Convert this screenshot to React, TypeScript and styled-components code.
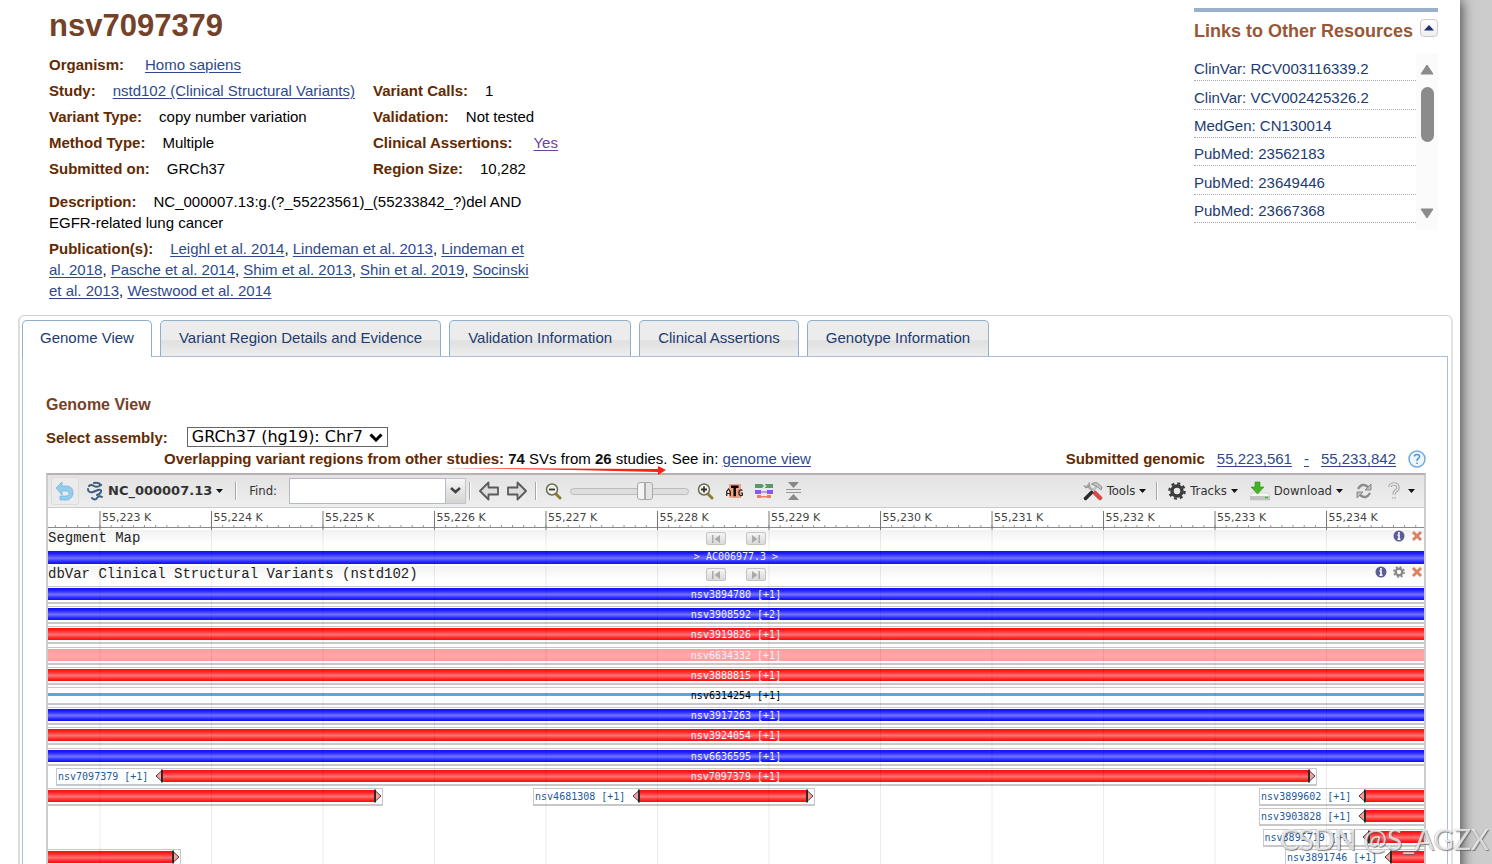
import React from "react";
import styled, { createGlobalStyle, css } from "styled-components";

const GlobalStyle = createGlobalStyle`
  * { box-sizing: border-box; }
  body { margin: 0; background: #ccc; color: #000; font: 15px/21px Arial, "Liberation Sans", sans-serif; }
  button, input, select { font: inherit; color: inherit; margin: 0; padding: 0; }
  ul, h1, h2, dl, dd, p { margin: 0; padding: 0; }
`;

const brown = "#642a02";
const linkBlue = "#2f4a8b";

/* ---------- page ---------- */
const Page = styled.div`
  height: 100vh;
  overflow: hidden;
  padding-right: 32px;
`;
const Sheet = styled.main`
  position: relative;
  min-height: 100vh;
  background: #fff;
  box-shadow: 2px 0 12px rgba(0, 0, 0, 0.65);
  padding: 8px 7px 0 18px;
`;
const Header = styled.header`
  display: flex;
  justify-content: space-between;
  padding: 0 15px 14px 31px;
`;
const Info = styled.section`
  width: 488px;
`;
const Title = styled.h1`
  font-size: 31px;
  line-height: 36px;
  color: #744228;
  margin-bottom: 10px;
`;
const Facts = styled.dl`
  display: grid;
  grid-template-columns: 324px 1fr;
  row-gap: 5px;
  margin-bottom: 12px;
`;
const Fact = styled.div<{ $wide?: boolean }>`
  white-space: nowrap;
  ${(p) => p.$wide && css`grid-column: 1 / -1;`}
`;
const Term = styled.dt`
  display: inline;
  font-weight: bold;
  color: ${brown};
  margin-right: 17px;
`;
const Value = styled.dd<{ $indent?: boolean }>`
  display: inline;
  padding-left: ${(p) => (p.$indent ? 4 : 0)}px;
`;
const Paragraph = styled.div`
  margin-bottom: 5px;
`;
const Link = styled.a<{ $visited?: boolean }>`
  color: ${(p) => (p.$visited ? "#6b3fa0" : linkBlue)};
  text-decoration: underline;
  text-underline-offset: 2px;
`;

/* ---------- resources ---------- */
const Aside = styled.aside`
  width: 244px;
  border-top: 4px solid #9aafca;
`;
const AsideHead = styled.div`
  display: flex;
  justify-content: space-between;
  padding-top: 7px;
  margin-bottom: 10px;
`;
const AsideTitle = styled.h2`
  font-size: 18px;
  line-height: 24px;
  color: #985735;
  white-space: nowrap;
`;
const Collapse = styled.button`
  width: 18px;
  height: 18px;
  display: grid;
  place-items: center;
  border: 1px solid #ccc;
  border-radius: 4px;
  background: linear-gradient(#fff, #eee);
`;
const ScrollArea = styled.div`
  display: flex;
  height: 177px;
`;
const Resources = styled.ul`
  flex: 1;
  height: 170px;
  display: grid;
  grid-template-rows: repeat(6, 1fr);
  list-style: none;
`;
const Resource = styled.li`
  display: flex;
  align-items: flex-end;
  line-height: 22px;
  border-bottom: 1px dotted #aaa;
  a { color: #1c3b70; text-decoration: none; }
`;
const ScrollTrack = styled.div`
  width: 22px;
  display: flex;
  flex-direction: column;
  align-items: center;
  padding: 11px 0;
  background: #fbfbfb;
`;
const Thumb = styled.div`
  width: 13px;
  height: 55px;
  margin: 12px 0 auto;
  border-radius: 7px;
  background: #8b8b8b;
`;

/* ---------- tabs ---------- */
const Tabs = styled.section`
  border: 2px solid #ddd;
  border-color: #d0d0d0 #e2e2e2 #d0d0d0 #ddd;
  border-width: 1px 2px;
  border-radius: 6px;
  padding: 4px 3px 4px 2px;
`;
const TabList = styled.div`
  display: flex;
  gap: 8px;
`;
const Tab = styled.button<{ $active?: boolean }>`
  height: 36px;
  padding: 0 18px 2px;
  white-space: nowrap;
  color: #1c3b70;
  border: 1px solid #8fb0cc;
  border-bottom: 0;
  border-radius: 5px 5px 0 0;
  background: linear-gradient(#ececec 55%, #e0e0e0 56%, #ededed);
  ${(p) =>
    p.$active &&
    css`
      position: relative;
      height: 37px;
      padding: 0 17px 3px;
      margin-bottom: -1px;
      background: #fff;
    `}
`;
const Panel = styled.div`
  border: 1px solid #a9bfd8;
  padding: 36px 21px 20px 23px;
`;
const PanelTitle = styled.h2`
  font-size: 16px;
  line-height: 24px;
  color: #744228;
  margin-bottom: 10px;
`;
const Assembly = styled.div`
  display: flex;
  align-items: center;
  gap: 19px;
  height: 20px;
  color: #000;
  label { font-weight: bold; color: ${brown}; }
`;
const SelectBox = styled.span`
  position: relative;
  display: inline-flex;
  svg { position: absolute; right: 5px; top: 6px; pointer-events: none; }
`;
const Select = styled.select`
  appearance: none;
  height: 20px;
  width: 201px;
  padding: 0 0 0 4px;
  border: 1px solid #666;
  border-radius: 0;
  background: #fff;
  color: #000;
  font: 16px/18px Verdana, "DejaVu Sans", sans-serif;
`;
const Summary = styled.div`
  display: flex;
  justify-content: space-between;
  align-items: center;
  padding: 1px 0 4px 118px;
  position: relative;
  b { color: #111; }
  strong { color: ${brown}; }
`;
const Submitted = styled.span`
  display: flex;
  align-items: center;
  gap: 12px;
`;
const RedArrow = styled.svg`
  position: absolute;
  left: 396px;
  top: 17px;
`;

/* ---------- viewer ---------- */
const Viewer = styled.div`
  border: 2px solid #cbcbcb;
  border-top-color: #b9b0b0;
`;
const Bar = styled.div`
  display: flex;
  justify-content: space-between;
  height: 33px;
  padding: 0 9px 0 3px;
  background: linear-gradient(#e3e3e3, #eee);
  border-bottom: 1px solid #ccc;
  color: #333;
  font: 13px/16px "DejaVu Sans Condensed", Tahoma, "DejaVu Sans", sans-serif;
`;
const Group = styled.div<{ $gap?: number }>`
  display: flex;
  align-items: center;
  gap: ${(p) => p.$gap ?? 12}px;
`;
const Tool = styled.button<{ $bold?: boolean; $boxed?: boolean; $gap?: number }>`
  display: flex;
  align-items: center;
  gap: ${(p) => p.$gap ?? 4}px;
  white-space: nowrap;
  border: 0;
  background: none;
  ${(p) => p.$bold && css`font: bold 13px/16px "DejaVu Sans", sans-serif;`}
  ${(p) => p.$boxed && css`border: 1px solid #dcdcdc; border-radius: 2px; padding: 3px; background: #ebebeb;`}
`;
const Separator = styled.span`
  width: 2px;
  height: 18px;
  background: linear-gradient(90deg, #aca899 50%, #fff 50%);
`;
const Finder = styled.span`
  display: flex;
  height: 26px;
`;
const FindInput = styled.input`
  width: 157px;
  border: 1px solid #b5b8c8;
  background: #fff;
`;
const Drop = styled.button`
  width: 20px;
  display: grid;
  place-items: start center;
  padding-top: 8px;
  border: 1px solid #c3c3cc;
  border-left: 0;
  background: linear-gradient(#f5f5f5, #d4d4d4);
`;
const Slider = styled.input`
  appearance: none;
  width: 119px;
  height: 18px;
  background: none;
  &::-webkit-slider-runnable-track {
    height: 7px;
    border: 1px solid #bbb;
    border-radius: 4px;
    background: #dedede;
  }
  &::-webkit-slider-thumb {
    appearance: none;
    width: 16px;
    height: 18px;
    margin-top: -7px;
    border: 1px solid #aaa;
    border-radius: 3px;
    background: linear-gradient(90deg, #f4f4f4 44%, #aaa 44% 56%, #e4e4e4 56%);
  }
`;
const View = styled.div`
  position: relative;
  overflow: hidden;
  background: #fff;
`;
const Ruler = styled.svg`
  display: block;
  width: 100%;
  height: 22px;
  text { font: 11px "DejaVu Sans", sans-serif; fill: #444; }
`;
const GridLines = styled.svg`
  position: absolute;
  inset: 22px 0 0 0;
  width: 100%;
  height: 100%;
  pointer-events: none;
`;
const TrackHead = styled.div`
  display: grid;
  grid-template-columns: 1fr auto 1fr;
  height: 20px;
  background: linear-gradient(#f2f2f2, #fff 70%);
  color: #222;
  font: 14px/16px "Liberation Mono", monospace;
  white-space: nowrap;
`;
const Steps = styled.span`
  display: flex;
  gap: 20px;
  padding-top: 2px;
`;
const Step = styled.button`
  width: 20px;
  height: 13px;
  display: grid;
  place-items: center;
  border: 1px solid #c4c4c4;
  border-radius: 2px;
  background: linear-gradient(#f4f4f4, #dadada);
`;
const HeadIcons = styled.span`
  display: flex;
  justify-content: flex-end;
  gap: 6px;
  padding-right: 1px;
  button { display: flex; border: 0; background: none; height: 12px; }
`;
const Lanes = styled.div`
  display: grid;
  grid-template-rows: repeat(14, 1fr);
  height: 283px;
`;
const Lane = styled.div`
  position: relative;
`;
const Feature = styled.div<{ $openLeft: boolean; $openRight: boolean }>`
  position: absolute;
  top: 0;
  display: flex;
  height: 18px;
  padding: 1px 0 2px;
  border: 1px solid #c8c8c8;
  border-bottom-width: 2px;
  background: #fff;
  ${(p) => p.$openLeft && css`border-left: 0;`}
  ${(p) => p.$openRight && css`border-right: 0;`}
`;
const fills = {
  blue: "linear-gradient(#1010f4, #2020ff 20%, #7272ff 55%, #2020ff 85%, #1010f4)",
  red: "linear-gradient(#f41010, #ff2020 20%, #ff7272 55%, #ff2020 85%, #f41010)",
  pink: "linear-gradient(#ff9c9c, #ffa8a8 50%, #ff9c9c)",
  thin: "linear-gradient(#fff 34%, #58a4f0 34% 58%, #fff 58%)",
};
type Fill = keyof typeof fills;
const Glyph = styled.div<{ $fill: Fill }>`
  flex: 1;
  height: 12px;
  text-align: center;
  white-space: nowrap;
  color: ${(p) => (p.$fill === "thin" ? "#000" : "#f0f0ff")};
  background: ${(p) => fills[p.$fill]};
  font: 10px/14px "DejaVu Sans Mono", monospace;
`;
const Segment = styled(Glyph)`
  height: 13px;
  margin: 1px 0 2px;
  line-height: 12px;
`;
const Name = styled.span`
  padding: 0 7px 0 1px;
  white-space: nowrap;
  color: #24599c;
  font: 10px/14px "DejaVu Sans Mono", monospace;
`;
const Watermark = styled.div`
  position: fixed;
  right: 3px;
  bottom: 7px;
  font: 28px/36px Lato, "Liberation Sans", sans-serif;
  color: rgba(255, 255, 255, 0.7);
  text-shadow: 1px 1px 1px rgba(90, 90, 90, 0.7), -1px 0 1px rgba(150, 150, 150, 0.4);
  pointer-events: none;
`;

/* ---------- icons ---------- */
const Caret = () => (
  <svg width="7" height="4"><path d="M0 0h7L3.500 4z" fill="#111" /></svg>
);
const UndoIcon = () => (
  <svg width="20" height="20" viewBox="0 0 20 20">
    <path d="M1 7l6-6v4h5c8 0 8 13 0 14H5v-4h6c4 0 4-5 0-5H7v4z" fill="#93cdee" stroke="#6db1da" strokeWidth=".7" />
  </svg>
);
const DnaIcon = () => (
  <svg width="18" height="20" viewBox="0 0 18 20" fill="none" stroke="#3d5d7c" strokeWidth="2" strokeLinecap="round">
    <path d="M3 5q2-2 5 0t7-1" />
    <path d="M8 2q5-1 7 2" />
    <path d="M2 8q0 4 5 3l5-2q4-1 3 2-1 2-4 3" />
    <path d="M6 17q3 3 5 0t5-1" />
  </svg>
);
const BigArrow = ({ right }: { right?: boolean }) => (
  <svg width="20" height="20" viewBox="0 0 20 20">
    <path transform={right ? "translate(20 0) scale(-1 1)" : undefined} d="M1 10l8.500-8.500v5H19v7H9.500v5z" fill="#ddd" stroke="#5a5a5a" strokeWidth="1.800" strokeLinejoin="round" />
  </svg>
);
const Lens = ({ plus }: { plus?: boolean }) => (
  <svg width="17" height="18" viewBox="0 0 17 18">
    <path d="M10 11l5 5" stroke="#8a8035" strokeWidth="3" strokeLinecap="round" />
    <circle cx="7" cy="7.500" r="5.500" fill="#f4f4ec" stroke="#6c6c50" strokeWidth="1.500" />
    <path d={plus ? "M4 7.500h6M7 4.500v6" : "M4 7.500h6"} stroke="#333" strokeWidth="1.800" />
  </svg>
);
const AtgIcon = () => (
  <svg width="17" height="16" viewBox="0 0 17 16" fill="none">
    <rect x="3" y="1" width="12" height="14" fill="#eda286" />
    <path d="M.7 13V8.500L2.500 6l1.800 2.500V13M1 10.500h3" stroke="#2b1c18" strokeWidth="1.200" />
    <path d="M16.400 7.500L15 6.700l-2 1.300v3.500l1.800 1.200 1.600-.7V10H15" stroke="#2b1c18" strokeWidth="1.200" />
    <path d="M5 3.800h7.500M8.700 4v9.200" strokeWidth="2.400" stroke="#000" />
  </svg>
);
const MarkersIcon = () => (
  <svg width="19" height="16" viewBox="0 0 19 16">
    <path d="M0 1h7l2 2-2 2H0zM9.500 1H18v4H9.500l2-2z" fill="#569a68" />
    <path d="M0 7h6v4H0zM12 7h6v4h-6zM6 8.500h6v1H6z" fill="#8a55f5" />
    <path d="M2 12h4v3H2zM12 12h4v3h-4zM6 13h6v1.500H6z" fill="#e88068" />
  </svg>
);
const CollapseIcon = () => (
  <svg width="15" height="18" viewBox="0 0 15 18">
    <path d="M2 0h11L7.500 6zM2 18h11L7.500 12z" fill="#888" />
    <path d="M0 7.500h15M0 10.500h15" stroke="#999" />
  </svg>
);
const ToolsIcon = () => (
  <svg width="20" height="20" viewBox="0 0 20 20" fill="none">
    <path d="M4 4l8 8" stroke="#aaa" strokeWidth="2.500" />
    <path d="M1 4.500l2 2 3.500-1.500L6 1.500" stroke="#999" strokeWidth="1.500" />
    <path d="M12 12l5 5" stroke="#d94747" strokeWidth="4.500" strokeLinecap="round" />
    <path d="M14 5L9 11" stroke="#bbb" strokeWidth="2.500" />
    <path d="M8.500 3Q13 0 16 3.500L19 6l-1 3-4-3.500z" fill="#c4c4c4" stroke="#8f8f8f" />
    <path d="M8.500 11.500L2.500 17.500" stroke="#2b2b2b" strokeWidth="3.500" strokeLinecap="round" />
  </svg>
);
const Gear = ({ size = 18, color = "#3c3c3c" }: { size?: number; color?: string }) => (
  <svg width={size} height={size} viewBox="0 0 18 18" fill="none" stroke={color}>
    <circle cx="9" cy="9" r="5" strokeWidth="3.500" />
    <circle cx="9" cy="9" r="7.600" strokeWidth="2.400" strokeDasharray="3 2.970" />
  </svg>
);
const DownloadIcon = () => (
  <svg width="20" height="20" viewBox="0 0 20 20">
    <path d="M2 12h16l2 3v4H0v-4z" fill="#f6f6f6" stroke="#c4c4c4" strokeWidth=".6" />
    <path d="M0 15h20v4H0z" fill="#c2c2c2" />
    <path d="M5 1h5v5h4l-6.500 7L1 6h4z" fill="#43b322" stroke="#2d8d15" strokeWidth=".6" />
    <path d="M15 16.500h3" stroke="#39c03a" strokeWidth="1.500" />
  </svg>
);
const RefreshIcon = () => (
  <svg width="18" height="18" viewBox="0 0 18 18" fill="none" stroke="#8b8b8b" strokeWidth="2.400">
    <path d="M3 7q4-7 10-2M15 11q-4 7-10 2" />
    <path d="M16 2v6h-6zM2 16v-6h6z" fill="#bbb" strokeWidth="1" />
  </svg>
);
const QuestionIcon = () => (
  <svg width="12" height="18" viewBox="0 0 12 18" fill="none">
    <path d="M2 5q0-3 4-3t4 3.500Q10 8 7.500 9 6 10 6 12.500M6 15v1.500" stroke="#999" strokeWidth="3.200" />
    <path d="M2 5q0-3 4-3t4 3.500Q10 8 7.500 9 6 10 6 12.500M6 15v1.500" stroke="#eee" strokeWidth="1.400" />
  </svg>
);
const HelpIcon = () => (
  <svg width="18" height="18" viewBox="0 0 18 18" fill="none">
    <circle cx="9" cy="9" r="8" fill="#eef6fd" stroke="#6fabdd" strokeWidth="1.500" />
    <path d="M6.500 6.500q0-2 2.500-2t2.500 2.200Q11.500 8 9.800 9 9 9.500 9 11M9 12.500v1.600" stroke="#4d94d6" strokeWidth="1.500" />
  </svg>
);
const InfoIcon = () => (
  <svg width="12" height="12" viewBox="0 0 12 12">
    <circle cx="6" cy="6" r="5.500" fill="#5c5c96" />
    <path d="M6 2v2M4.500 5H6v4M4.500 9.200h3" stroke="#fff" strokeWidth="1.600" fill="none" />
  </svg>
);
const CloseIcon = () => (
  <svg width="12" height="12" viewBox="0 0 12 12">
    <path d="M2 2l8 8M10 2l-8 8" stroke="#d98462" strokeWidth="3" />
  </svg>
);
const StepIcon = ({ next }: { next?: boolean }) => (
  <svg width="10" height="8" viewBox="0 0 10 8">
    <path transform={next ? "translate(10 0) scale(-1 1)" : undefined} d="M1 0h1.500v8H1zM9 0v8L3.500 4z" fill="#aaa" />
  </svg>
);
const TipSvg = styled.svg`
  margin-top: -1px;
  flex: none;
`;
const Tip = ({ right }: { right?: boolean }) => (
  <TipSvg width="8" height="14" viewBox="0 0 8 14">
    <g transform={right ? "translate(8 0) scale(-1 1)" : undefined}>
      <path d="M7 1.500L1 7l6 5.500z" fill="#ff9c9c" stroke="#444" />
      <path d="M7 .5v13" stroke="#111" strokeWidth="1.600" />
    </g>
  </TipSvg>
);

/* ---------- data ---------- */
const publications = [
  "Leighl et al. 2014", "Lindeman et al. 2013", "Lindeman et al. 2018", "Pasche et al. 2014",
  "Shim et al. 2013", "Shin et al. 2019", "Socinski et al. 2013", "Westwood et al. 2014",
];
const resources = [
  "ClinVar: RCV003116339.2", "ClinVar: VCV002425326.2", "MedGen: CN130014",
  "PubMed: 23562183", "PubMed: 23649446", "PubMed: 23667368",
];
const tabs = [
  "Genome View", "Variant Region Details and Evidence", "Validation Information",
  "Clinical Assertions", "Genotype Information",
];

/* Visible range in kilobases, counted from 55,000 K. */
const viewStart = 222.534;
const viewEnd = 234.874;
const pct = (kb: number) => `${((kb - viewStart) / (viewEnd - viewStart)) * 100}%`;
const majors = Array.from({ length: 12 }, (_, i) => 223 + i);
const minors = Array.from({ length: 123 }, (_, i) => (2226 + i) / 10);

type Variant = { name?: string; fill: Fill; from?: number; to?: number; inside?: boolean };
const lanes: Variant[][] = [
  [{ name: "nsv3894780 [+1]", fill: "blue", inside: true }],
  [{ name: "nsv3908592 [+2]", fill: "blue", inside: true }],
  [{ name: "nsv3919826 [+1]", fill: "red", inside: true }],
  [{ name: "nsv6634332 [+1]", fill: "pink", inside: true }],
  [{ name: "nsv3888815 [+1]", fill: "red", inside: true }],
  [{ name: "nsv6314254 [+1]", fill: "thin", inside: true }],
  [{ name: "nsv3917263 [+1]", fill: "blue", inside: true }],
  [{ name: "nsv3924054 [+1]", fill: "red", inside: true }],
  [{ name: "nsv6636595 [+1]", fill: "blue", inside: true }],
  [{ name: "nsv7097379 [+1]", fill: "red", from: 222.606, to: 233.918, inside: true }],
  [
    { fill: "red", to: 225.54 },
    { name: "nsv4681308 [+1]", fill: "red", from: 226.884, to: 229.413 },
    { name: "nsv3899602 [+1]", fill: "red", from: 233.395 },
  ],
  [{ name: "nsv3903828 [+1]", fill: "red", from: 233.395 }],
  [{ name: "nsv3895719 [+1]", fill: "red", from: 233.426 }],
  [{ fill: "red", to: 223.727 }, { name: "nsv3891746 [+1]", fill: "red", from: 233.628 }],
];

const VariantGlyph = ({ v }: { v: Variant }) => (
  <Feature
    $openLeft={v.from === undefined}
    $openRight={v.to === undefined}
    style={{ left: pct(v.from ?? viewStart), right: `calc(100% - ${pct(v.to ?? viewEnd)})` }}
  >
    {v.from !== undefined && <Name>{v.name}</Name>}
    {v.from !== undefined && <Tip />}
    <Glyph $fill={v.fill}>{v.inside && v.name}</Glyph>
    {v.to !== undefined && <Tip right />}
  </Feature>
);

const TrackHeader = ({ title, settings }: { title: string; settings?: boolean }) => (
  <TrackHead>
    <span>{title}</span>
    <Steps>
      <Step aria-label="Previous"><StepIcon /></Step>
      <Step aria-label="Next"><StepIcon next /></Step>
    </Steps>
    <HeadIcons>
      <button aria-label="Info"><InfoIcon /></button>
      {settings && <button aria-label="Settings"><Gear size={12} color="#888" /></button>}
      <button aria-label="Close"><CloseIcon /></button>
    </HeadIcons>
  </TrackHead>
);

export default function App() {
  return (
    <Page>
      <GlobalStyle />
      <Sheet>
        <Header>
          <Info>
            <Title>nsv7097379</Title>
            <Facts>
              <Fact $wide><Term>Organism:</Term><Value $indent><Link href="#">Homo sapiens</Link></Value></Fact>
              <Fact><Term>Study:</Term><Value><Link href="#">nstd102 (Clinical Structural Variants)</Link></Value></Fact>
              <Fact><Term>Variant Calls:</Term><Value>1</Value></Fact>
              <Fact><Term>Variant Type:</Term><Value>copy number variation</Value></Fact>
              <Fact><Term>Validation:</Term><Value>Not tested</Value></Fact>
              <Fact><Term>Method Type:</Term><Value>Multiple</Value></Fact>
              <Fact><Term>Clinical Assertions:</Term><Value $indent><Link href="#" $visited>Yes</Link></Value></Fact>
              <Fact><Term>Submitted on:</Term><Value>GRCh37</Value></Fact>
              <Fact><Term>Region Size:</Term><Value>10,282</Value></Fact>
            </Facts>
            <Paragraph>
              <Term as="b">Description:</Term>NC_000007.13:g.(?_55223561)_(55233842_?)del AND EGFR-related lung cancer
            </Paragraph>
            <p>
              <Term as="b">Publication(s):</Term>
              {publications.map((p, i) => (
                <React.Fragment key={p}>{i > 0 && ", "}<Link href="#">{p}</Link></React.Fragment>
              ))}
            </p>
          </Info>
          <Aside>
            <AsideHead>
              <AsideTitle>Links to Other Resources</AsideTitle>
              <Collapse aria-label="Collapse"><svg width="10" height="6"><path d="M0 5.500L5 0l5 5.500z" fill="#17326e" /></svg></Collapse>
            </AsideHead>
            <ScrollArea>
              <Resources>
                {resources.map((r) => <Resource key={r}><a href="#">{r}</a></Resource>)}
              </Resources>
              <ScrollTrack>
                <svg width="14" height="11"><path d="M7 1l6 9H1z" fill="#8b8b8b" stroke="#8b8b8b" strokeLinejoin="round" /></svg>
                <Thumb />
                <svg width="14" height="11"><path d="M7 10l6-9H1z" fill="#8b8b8b" stroke="#8b8b8b" strokeLinejoin="round" /></svg>
              </ScrollTrack>
            </ScrollArea>
          </Aside>
        </Header>

        <Tabs>
          <TabList role="tablist">
            {tabs.map((t, i) => <Tab key={t} role="tab" aria-selected={i === 0} $active={i === 0}>{t}</Tab>)}
          </TabList>
          <Panel role="tabpanel">
            <PanelTitle>Genome View</PanelTitle>
            <Assembly>
              <label htmlFor="assembly">Select assembly:</label>
              <SelectBox>
                <Select id="assembly"><option>GRCh37 (hg19): Chr7</option></Select>
                <svg width="14" height="9"><path d="M1.500 1.500L7 7l5.500-5.500" fill="none" stroke="#000" strokeWidth="3" /></svg>
              </SelectBox>
            </Assembly>
            <Summary>
              <span>
                <strong>Overlapping variant regions from other studies:</strong> <b>74</b> SVs from <b>26</b> studies. See in: <Link href="#">genome view</Link>
              </span>
              <Submitted>
                <strong>Submitted genomic</strong>
                <Link href="#">55,223,561</Link>
                <Link href="#">-</Link>
                <Link href="#">55,233,842</Link>
                <HelpIcon />
              </Submitted>
              <RedArrow width="226" height="12" viewBox="0 0 226 12">
                <path d="M0 4l216 1V2l8 4-8 5V8L130 6z" fill="#fb2316" />
              </RedArrow>
            </Summary>

            <Viewer>
              <Bar>
                <Group>
                  <Group $gap={7}>
                    <Tool $boxed aria-label="Back"><UndoIcon /></Tool>
                    <Tool $bold><DnaIcon />NC_000007.13 <Caret /></Tool>
                  </Group>
                  <Separator />
                  <label htmlFor="find">Find:</label>
                  <Group $gap={8}>
                    <Group $gap={3}>
                      <Finder>
                        <FindInput id="find" />
                        <Drop aria-label="Show history"><svg width="11" height="7"><path d="M1 1l4.500 4L10 1" fill="none" stroke="#444" strokeWidth="2.500" /></svg></Drop>
                      </Finder>
                      <Separator />
                    </Group>
                    <Tool aria-label="Pan left"><BigArrow /></Tool>
                    <Tool aria-label="Pan right"><BigArrow right /></Tool>
                    <Separator />
                    <Tool aria-label="Zoom out"><Lens /></Tool>
                    <Slider type="range" aria-label="Zoom" min="0" max="100" defaultValue="65" />
                    <Tool aria-label="Zoom in"><Lens plus /></Tool>
                  </Group>
                  <Tool aria-label="Zoom to sequence"><AtgIcon /></Tool>
                  <Tool aria-label="Markers"><MarkersIcon /></Tool>
                  <Tool aria-label="Collapse tracks"><CollapseIcon /></Tool>
                </Group>
                <Group>
                  <Group $gap={10}>
                    <Tool><ToolsIcon />Tools <Caret /></Tool>
                    <Separator />
                    <Tool><Gear />Tracks <Caret /></Tool>
                  </Group>
                  <Tool><DownloadIcon />Download <Caret /></Tool>
                  <Group $gap={15}>
                    <Tool aria-label="Refresh"><RefreshIcon /></Tool>
                    <Tool aria-label="Help" $gap={8}><QuestionIcon /><Caret /></Tool>
                  </Group>
                </Group>
              </Bar>
              <View>
                <Ruler>
                  {minors.map((k) => <line key={k} x1={pct(k)} x2={pct(k)} y1="17" y2="19" stroke="#999" />)}
                  <line x1="0" x2="100%" y1="19.500" y2="19.500" stroke="#8a8a8a" />
                  {majors.map((k) => (
                    <g key={k}>
                      <line x1={pct(k)} x2={pct(k)} y1="3" y2="22" stroke="#777" />
                      <svg x={pct(k)} overflow="visible"><text x="2" y="13">{`55,${k} K`}</text></svg>
                    </g>
                  ))}
                </Ruler>
                <TrackHeader title="Segment Map" />
                <Segment $fill="blue">&gt; AC006977.3 &gt;</Segment>
                <TrackHeader title="dbVar Clinical Structural Variants (nstd102)" settings />
                <Lanes>
                  {lanes.map((lane, i) => (
                    <Lane key={i}>{lane.map((v, j) => <VariantGlyph key={j} v={v} />)}</Lane>
                  ))}
                </Lanes>
                <GridLines>
                  {majors.map((k) => <line key={k} x1={pct(k)} x2={pct(k)} y1="0" y2="100%" stroke="rgba(0,0,0,.08)" />)}
                </GridLines>
              </View>
            </Viewer>
          </Panel>
        </Tabs>
      </Sheet>
      <Watermark>CSDN @S_AGZX</Watermark>
    </Page>
  );
}
